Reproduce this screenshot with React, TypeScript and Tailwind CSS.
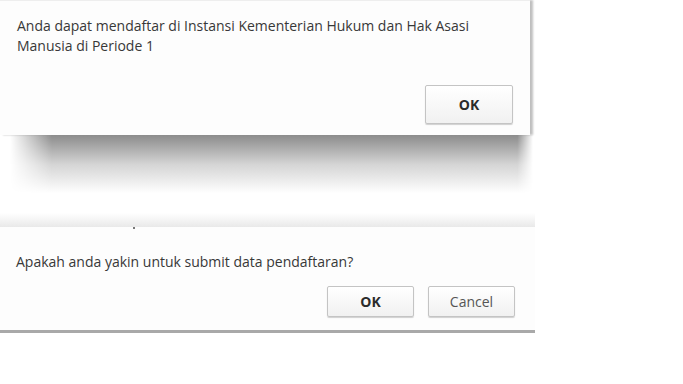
import React from "react";

const font = { fontFamily: '"Open Sans", "Noto Sans", sans-serif' };

function DialogButton({ label, bold, className }: { label: string; bold?: boolean; className?: string }) {
  return (
    <button
      className={
        "flex items-center justify-center rounded-[2px] border border-[#c4c4c4] bg-gradient-to-b from-[#ffffff] to-[#f1f1f1] text-[14px] shadow-[0_1px_1px_rgba(0,0,0,0.18)] " +
        (bold ? "font-bold text-[#2b2b2b] " : "text-[#555] ") +
        (className ?? "")
      }
    >
      {label}
    </button>
  );
}

export default function App() {
  return (
    <div className="w-[683px] h-[384px] overflow-hidden bg-white" style={font}>
      {/* first alert */}
      <div className="relative w-[533px]">
        <div className="w-[530px] border-t border-[#eeeeee] bg-[#fdfdfd] pl-[17px] pr-[17px] pt-[15px] pb-[11px] shadow-[3px_0_2px_rgba(0,0,0,0.25)]">
          <p className="text-[14px] leading-[20px] text-[#383838]">
            Anda dapat mendaftar di Instansi Kementerian Hukum dan Hak Asasi
            <br />
            Manusia di Periode 1
          </p>
          <div className="mt-[29px] flex justify-end">
            <DialogButton label="OK" bold className="w-[88px] h-[39px]" />
          </div>
        </div>
        {/* drop shadow under the alert */}
        <div className="ml-[10px] h-[58px] w-[523px] bg-gradient-to-b from-[#8c8c8c] via-[#d4d4d4] to-white [mask-image:linear-gradient(to_right,transparent,black_8%,black_97%,transparent)]" />
      </div>

      {/* second confirm */}
      <div className="mt-[20px] h-[14px] w-[535px] bg-gradient-to-b from-white to-[#e9e9e9]" />
      <div className="relative w-[535px] bg-[#fdfdfd] pl-[16px] pr-[20px] pt-[25px] pb-[13px] border-b-[3px] border-[#a9a9a9]">
        <span className="absolute left-[133px] top-[0px] h-[2px] w-[2px] bg-[#777]" />
        <p className="text-[14px] leading-[20px] text-[#383838]">
          Apakah anda yakin untuk submit data pendaftaran?
        </p>
        <div className="mt-[14px] flex justify-end gap-[14px]">
          <DialogButton label="OK" bold className="w-[87px] h-[31px]" />
          <DialogButton label="Cancel" className="w-[87px] h-[31px]" />
        </div>
      </div>
    </div>
  );
}
